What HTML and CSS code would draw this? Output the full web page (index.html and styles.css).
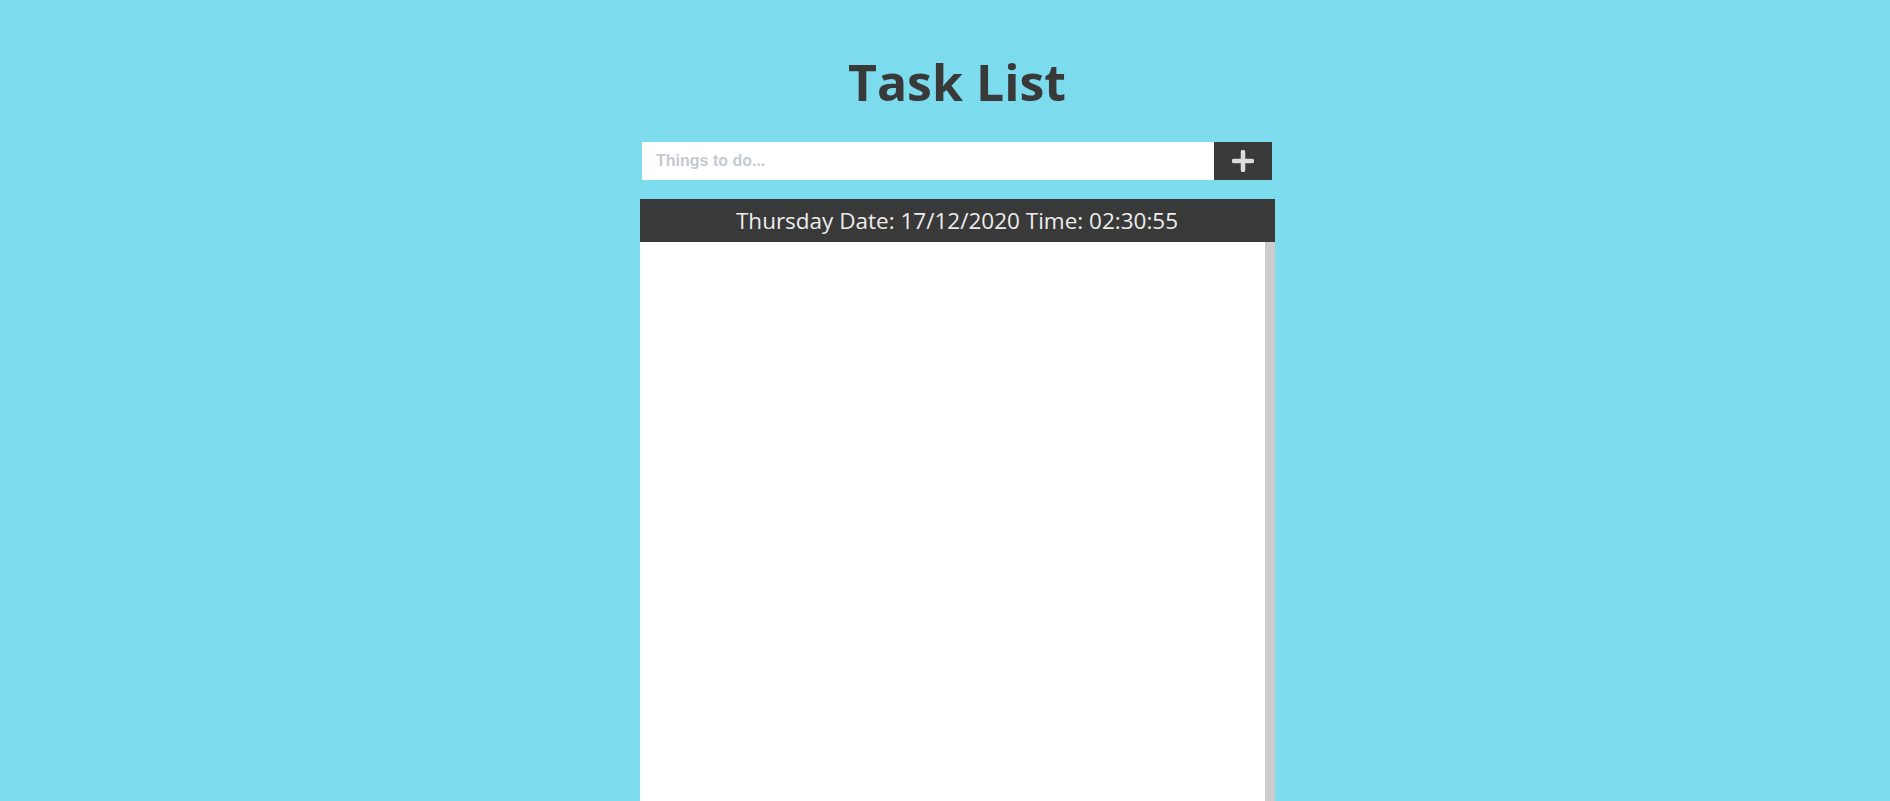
FILE: index.html
```html
<!DOCTYPE html>
<html>
<head>
<meta charset="utf-8">
<title>Task List</title>
<link rel="stylesheet" href="styles.css">
</head>
<body>
<div class="page">
  <h1 class="title">Task List</h1>
  <form class="add-form">
    <input class="task-input" type="text" placeholder="Things to do...">
    <button class="add-btn" type="button" aria-label="Add">
      <svg width="22" height="22" viewBox="0 0 22 22"><path d="M11 2v18M2 11h18" stroke="#dcdcdc" stroke-width="4.5" stroke-linecap="round"/></svg>
    </button>
  </form>
  <div class="panel">
    <div class="panel-header">Thursday Date: 17/12/2020 Time: 02:30:55</div>
    <div class="panel-body"></div>
  </div>
</div>
</body>
</html>
```
FILE: styles.css
```css
html, body {
  margin: 0;
  height: 100%;
  overflow: hidden;
}
body {
  background: #7cdcee;
  font-family: "Open Sans", sans-serif;
}
.page {
  display: flex;
  flex-direction: column;
  align-items: center;
  padding-left: 24px;
  height: 100%;
}
.title {
  margin: 48px 0 25px;
  font-size: 50px;
  font-weight: 700;
  color: #393939;
  line-height: 69px;
}
.add-form {
  display: flex;
  width: 630px;
  height: 38px;
  margin: 0 0 19px;
}
.task-input {
  flex: 1;
  border: none;
  outline: none;
  margin: 0;
  padding: 0 14px;
  height: 38px;
  font-family: "Liberation Sans", Arial, sans-serif;
  font-weight: 700;
  font-size: 16px;
  background: #fff;
}
.task-input::placeholder {
  color: #c6c9d2;
}
.add-btn {
  width: 58px;
  height: 38px;
  border: none;
  margin: 0;
  padding: 0;
  background: #3a3a3a;
  display: flex;
  align-items: center;
  justify-content: center;
}
.panel {
  width: 635px;
  flex: 1;
  display: flex;
  flex-direction: column;
}
.panel-header {
  background: #393939;
  color: #ececec;
  font-size: 22.5px;
  line-height: 43px;
  height: 43px;
  text-align: center;
}
.panel-body {
  flex: 1;
  background: #fff;
  border-right: 10px solid #cccccc;
}
```
